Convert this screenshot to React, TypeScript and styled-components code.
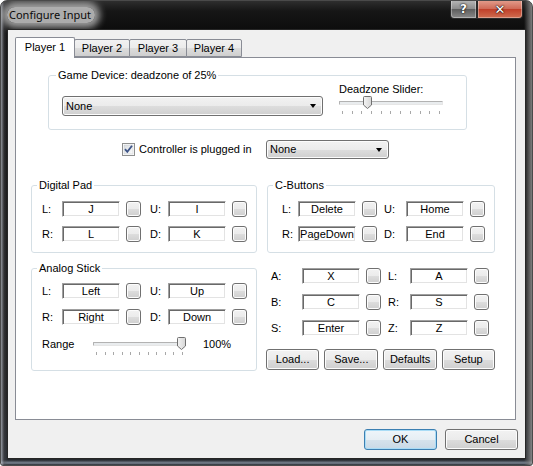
import React from "react";
import styled, { createGlobalStyle, css } from "styled-components";

const Global = createGlobalStyle`
  html, body { margin: 0; padding: 0; background: #ffffff; }
  body { font-family: "Liberation Sans", Arial, sans-serif; font-size: 11px; color: #000; }
  * { box-sizing: border-box; }
`;

const btnFace = css`
  border: 1px solid #707070;
  border-radius: 3px;
  background: linear-gradient(180deg, #f2f2f2 0%, #ebebeb 50%, #dddddd 51%, #cfcfcf 100%);
  box-shadow: inset 0 0 0 1px #fcfcfc;
`;

const Window = styled.div`
  width: 533px;
  height: 466px;
  display: flex;
  flex-direction: column;
  padding: 0 7px 7px;
  border: 1px solid #4a4a4a;
  border-radius: 7px 7px 3px 3px;
  background:
    linear-gradient(90deg, rgba(200,205,215,0.7) 0px, rgba(90,90,95,0.4) 3px, rgba(0,0,0,0) 7px, rgba(0,0,0,0) calc(100% - 8px), rgba(120,120,120,0.55) calc(100% - 4px), rgba(170,170,170,0.7) 100%),
    linear-gradient(180deg, rgba(0,0,0,0) 0, rgba(0,0,0,0) calc(100% - 5px), rgba(190,205,225,0.55) calc(100% - 2px), rgba(0,0,0,0) 100%),
    linear-gradient(180deg, #2e2e2e 0px, #161616 10px, #0c0c0c 30px, #1c1c1c 85%, #262a30 100%);
  overflow: hidden;
`;

const TitleBar = styled.div`
  height: 29px;
  margin: 0 -7px;
  padding-left: 2px;
  display: flex;
  align-items: flex-start;
  justify-content: space-between;
`;

const TitleText = styled.div`
  margin-top: 6px;
  margin-left: 4px;
  padding: 0 4px 0 2px;
  font-family: "Noto Sans", "Open Sans", sans-serif;
  font-size: 11px;
  line-height: 16px;
  color: #0a0a0a;
  border-radius: 8px;
  background: rgba(215, 215, 215, 0.78);
  box-shadow: 0 0 7px 5px rgba(215, 215, 215, 0.7);
`;

const CaptionButtons = styled.div`
  display: flex;
  margin-right: 9px;
  margin-top: -1px;
`;

const CaptionButton = styled.div<{ $close?: boolean }>`
  width: ${(p) => (p.$close ? 46 : 27)}px;
  height: 19px;
  display: flex;
  align-items: center;
  justify-content: center;
  border: 1px solid #2a2a2a;
  border-top: none;
  font-family: "DejaVu Sans", sans-serif;
  font-weight: bold;
  font-size: ${(p) => (p.$close ? 13 : 12)}px;
  color: #ffffff;
  text-shadow: 0 0 2px #000, 0 0 1px #000;
  box-shadow: inset 0 0 0 1px rgba(255, 255, 255, 0.35);
  border-radius: ${(p) => (p.$close ? "0 0 4px 0" : "0 0 0 4px")};
  background: ${(p) =>
    p.$close
      ? "linear-gradient(180deg, #e4a08f 0%, #cf6b58 48%, #c0402a 52%, #cf6d50 100%)"
      : "linear-gradient(180deg, #b9b9b9 0%, #8d8d8d 48%, #5e5e5e 52%, #8a8a8a 100%)"};
`;

const Client = styled.div`
  flex: 1;
  display: flex;
  flex-direction: column;
  padding: 7px 0 0 7px;
  background: #f0f0f0;
  box-shadow: 0 0 0 1px #262626;
`;

const TabStrip = styled.div`
  display: flex;
  align-items: flex-end;
  height: 20px;
  position: relative;
  z-index: 1;
`;

const Tab = styled.div<{ $active?: boolean; $w: number }>`
  width: ${(p) => p.$w}px;
  height: ${(p) => (p.$active ? 21 : 18)}px;
  margin-bottom: ${(p) => (p.$active ? -1 : 0)}px;
  margin-left: ${(p) => (p.$active ? 0 : -1)}px;
  display: flex;
  align-items: center;
  justify-content: center;
  padding-bottom: ${(p) => (p.$active ? 2 : 0)}px;
  border: 1px solid #898c95;
  border-bottom: ${(p) => (p.$active ? "none" : "1px solid #898c95")};
  border-radius: 2px 2px 0 0;
  background: ${(p) =>
    p.$active ? "#ffffff" : "linear-gradient(180deg, #f2f2f2 0%, #ebebeb 50%, #dddddd 51%, #cfcfcf 100%)"};
  &:first-child { margin-left: 0; }
`;

const Panel = styled.div`
  width: 501px;
  height: 363px;
  margin-right: 9px;
  border: 1px solid #898c95;
  background: #ffffff;
  padding-left: 15px;
  display: flex;
  flex-direction: column;
`;

const Group = styled.fieldset<{ $w: number; $h: number }>`
  margin: 0;
  padding: 0;
  min-width: 0;
  width: ${(p) => p.$w}px;
  height: ${(p) => p.$h}px;
  border: 1px solid #d5dfe5;
  border-radius: 3px;
`;

const Legend = styled.legend<{ $indent: number }>`
  margin-left: ${(p) => p.$indent}px;
  padding: 0 2px;
  font-size: 11px;
  line-height: 13px;
`;

const DeviceGroup = styled(Group)`
  margin: 11px 0 0 17px;
`;

const DeviceRow = styled.div`
  display: flex;
  align-items: flex-start;
  padding-left: 13px;
`;

const Combo = styled.div<{ $w: number; $h: number; $top?: number }>`
  ${btnFace};
  width: ${(p) => p.$w}px;
  height: ${(p) => p.$h}px;
  margin-top: ${(p) => p.$top ?? 0}px;
  display: flex;
  align-items: center;
  justify-content: space-between;
  padding: 0 6px 0 3px;
  line-height: 13px;
`;

const Arrow = styled.span`
  width: 0;
  height: 0;
  border-left: 3.5px solid transparent;
  border-right: 3.5px solid transparent;
  border-top: 4px solid #000;
`;

const SliderColumn = styled.div`
  margin-left: 16px;
  display: flex;
  flex-direction: column;
`;

const SliderLabel = styled.div`
  line-height: 13px;
  margin-top: 1px;
`;

const SliderBox = styled.div<{ $w: number }>`
  position: relative;
  width: ${(p) => p.$w}px;
  height: 13px;
`;

const Track = styled.div`
  position: absolute;
  left: 0;
  right: 0;
  top: 5px;
  height: 4px;
  border: 1px solid;
  border-color: #b2b2b2 #e6e6e6 #e6e6e6 #b2b2b2;
  background: #e9ecee;
  border-radius: 1px;
`;

const ThumbSvg = styled.svg`
  position: absolute;
  top: 0;
`;

const Ticks = styled.div`
  display: flex;
  justify-content: space-between;
  padding: 0 3px;
  margin-top: 2px;
  height: 3px;
`;

const Tick = styled.span`
  width: 1px;
  height: 3px;
  background: #a8a8a8;
`;

const CheckRow = styled.div`
  display: flex;
  align-items: center;
  margin: 10px 0 0 91px;
`;

const CheckLabel = styled.label`
  width: 144px;
  display: flex;
  align-items: center;
  gap: 4px;
  line-height: 13px;
`;

const Lower = styled.div`
  display: grid;
  grid-template-columns: 226px 228px;
  column-gap: 10px;
  row-gap: 9px;
  margin-top: 20px;
`;

const KeyGrid = styled.div<{ $cols: string; $pad: number; $top: number; $gap: number }>`
  display: grid;
  grid-template-columns: ${(p) => p.$cols};
  row-gap: ${(p) => p.$gap}px;
  align-items: center;
  padding-left: ${(p) => p.$pad}px;
  margin-top: ${(p) => p.$top}px;
`;

const KeyLabel = styled.span`
  line-height: 13px;
`;

const KeyField = styled.div`
  height: 16px;
  background: #ffffff;
  border: 1px solid;
  border-color: #a0a0a0 #ffffff #ffffff #a0a0a0;
  box-shadow: inset 1px 1px 0 #696969, inset -1px -1px 0 #e3e3e3;
  text-align: center;
  line-height: 14px;
  white-space: nowrap;
  overflow: hidden;
`;

const SmallBtn = styled.div<{ $ml: number }>`
  ${btnFace};
  width: 15px;
  height: 16px;
  margin-left: ${(p) => p.$ml}px;
`;

const RangeRow = styled.div`
  display: flex;
  align-items: flex-start;
  padding-left: 10px;
  margin-top: 12px;
`;

const RangeLabel = styled.span`
  width: 51px;
  line-height: 13px;
  margin-top: 1px;
`;

const RangeValue = styled.span`
  margin-left: 17px;
  line-height: 13px;
  margin-top: 1px;
`;

const RightColumn = styled.div`
  padding-top: 6px;
  display: flex;
  flex-direction: column;
`;

const ActionRow = styled.div`
  display: flex;
  gap: 5px;
  margin-top: 13px;
  margin-left: -1px;
`;

const PushButton = styled.div<{ $w: number; $h: number; $default?: boolean }>`
  ${btnFace};
  width: ${(p) => p.$w}px;
  height: ${(p) => p.$h}px;
  display: flex;
  align-items: center;
  justify-content: center;
  line-height: 13px;
  ${(p) =>
    p.$default &&
    css`
      border-color: #3c7fb1;
      box-shadow: inset 0 0 0 1px #a9dcf6;
      background: linear-gradient(180deg, #eef5fa 0%, #e6eef4 50%, #d6e3ec 51%, #c9d9e6 100%);
    `}
`;

const DialogButtons = styled.div`
  display: flex;
  justify-content: flex-end;
  gap: 8px;
  margin-top: 9px;
  padding-right: 7px;
`;

function Slider({ width, value }: { width: number; value: number }) {
  const left = Math.round((width - 9) * value);
  return (
    <div>
      <SliderBox $w={width}>
        <Track />
        <ThumbSvg width="9" height="13" viewBox="0 0 9 13" style={{ left }}>
          <defs>
            <linearGradient id={`tg${width}`} x1="0" y1="0" x2="1" y2="0">
              <stop offset="0" stopColor="#f4f4f4" />
              <stop offset="1" stopColor="#d6d6d6" />
            </linearGradient>
          </defs>
          <path
            d="M1.5 0.5 H7.5 Q8.5 0.5 8.5 1.5 V9 L4.5 12.5 L0.5 9 V1.5 Q0.5 0.5 1.5 0.5 Z"
            fill={`url(#tg${width})`}
            stroke="#707070"
          />
        </ThumbSvg>
      </SliderBox>
      <Ticks>
        {Array.from({ length: 11 }).map((_, i) => (
          <Tick key={i} />
        ))}
      </Ticks>
    </div>
  );
}

function CheckBox() {
  return (
    <svg width="13" height="13" viewBox="0 0 13 13">
      <defs>
        <linearGradient id="cbg" x1="0" y1="0" x2="1" y2="1">
          <stop offset="0" stopColor="#d8dce0" />
          <stop offset="1" stopColor="#fbfbfb" />
        </linearGradient>
      </defs>
      <rect x="0.5" y="0.5" width="12" height="12" fill="#fff" stroke="#8e8f8f" />
      <rect x="2" y="2" width="9" height="9" fill="url(#cbg)" stroke="#c2c6cb" strokeWidth="0.5" />
      <path d="M3 6.2 L5.3 8.8 L10 2.8" fill="none" stroke="#3d5487" strokeWidth="1.8" />
    </svg>
  );
}

type Pair = [string, string];

function Keys({
  rows,
  cols,
  pad,
  top,
  gap,
}: {
  rows: [Pair, Pair][];
  cols: string;
  pad: number;
  top: number;
  gap: number;
}) {
  return (
    <KeyGrid $cols={cols} $pad={pad} $top={top} $gap={gap}>
      {rows.map(([a, b], i) => (
        <React.Fragment key={i}>
          <KeyLabel>{a[0]}</KeyLabel>
          <KeyField>{a[1]}</KeyField>
          <SmallBtn $ml={6} />
          <KeyLabel>{b[0]}</KeyLabel>
          <KeyField>{b[1]}</KeyField>
          <SmallBtn $ml={6} />
        </React.Fragment>
      ))}
    </KeyGrid>
  );
}

export default function App() {
  return (
    <>
      <Global />
      <Window>
        <TitleBar>
          <TitleText>Configure Input</TitleText>
          <CaptionButtons>
            <CaptionButton>?</CaptionButton>
            <CaptionButton $close>✕</CaptionButton>
          </CaptionButtons>
        </TitleBar>
        <Client>
          <TabStrip>
            <Tab $active $w={60}>Player 1</Tab>
            <Tab $w={56}>Player 2</Tab>
            <Tab $w={58}>Player 3</Tab>
            <Tab $w={56}>Player 4</Tab>
          </TabStrip>
          <Panel>
            <DeviceGroup $w={419} $h={61}>
              <Legend $indent={7}>Game Device: deadzone of 25%</Legend>
              <DeviceRow>
                <Combo $w={261} $h={20} $top={14}>
                  <span>None</span>
                  <Arrow />
                </Combo>
                <SliderColumn>
                  <SliderLabel>Deadzone Slider:</SliderLabel>
                  <Slider width={104} value={0.25} />
                </SliderColumn>
              </DeviceRow>
            </DeviceGroup>

            <CheckRow>
              <CheckLabel>
                <CheckBox />
                Controller is plugged in
              </CheckLabel>
              <Combo $w={123} $h={19}>
                <span>None</span>
                <Arrow />
              </Combo>
            </CheckRow>

            <Lower>
              <Group $w={226} $h={74}>
                <Legend $indent={5}>Digital Pad</Legend>
                <Keys
                  rows={[
                    [["L:", "J"], ["U:", "I"]],
                    [["R:", "L"], ["D:", "K"]],
                  ]}
                  cols="20px 58px 30px 18px 58px 21px"
                  pad={10}
                  top={9}
                  gap={9}
                />
              </Group>
              <Group $w={228} $h={74}>
                <Legend $indent={5}>C-Buttons</Legend>
                <Keys
                  rows={[
                    [["L:", "Delete"], ["U:", "Home"]],
                    [["R:", "PageDown"], ["D:", "End"]],
                  ]}
                  cols="16px 58px 28px 22px 58px 21px"
                  pad={14}
                  top={9}
                  gap={9}
                />
              </Group>
              <Group $w={226} $h={109}>
                <Legend $indent={5}>Analog Stick</Legend>
                <Keys
                  rows={[
                    [["L:", "Left"], ["U:", "Up"]],
                    [["R:", "Right"], ["D:", "Down"]],
                  ]}
                  cols="20px 58px 30px 18px 58px 21px"
                  pad={10}
                  top={8}
                  gap={10}
                />
                <RangeRow>
                  <RangeLabel>Range</RangeLabel>
                  <Slider width={93} value={1} />
                  <RangeValue>100%</RangeValue>
                </RangeRow>
              </Group>
              <RightColumn>
                <Keys
                  rows={[
                    [["A:", "X"], ["L:", "A"]],
                    [["B:", "C"], ["R:", "S"]],
                    [["S:", "Enter"], ["Z:", "Z"]],
                  ]}
                  cols="31px 58px 28px 22px 58px 21px"
                  pad={4}
                  top={0}
                  gap={10}
                />
                <ActionRow>
                  <PushButton $w={54} $h={21}>Load...</PushButton>
                  <PushButton $w={55} $h={21}>Save...</PushButton>
                  <PushButton $w={54} $h={21}>Defaults</PushButton>
                  <PushButton $w={54} $h={21}>Setup</PushButton>
                </ActionRow>
              </RightColumn>
            </Lower>
          </Panel>
          <DialogButtons>
            <PushButton $w={73} $h={21} $default>OK</PushButton>
            <PushButton $w={73} $h={21}>Cancel</PushButton>
          </DialogButtons>
        </Client>
      </Window>
    </>
  );
}
